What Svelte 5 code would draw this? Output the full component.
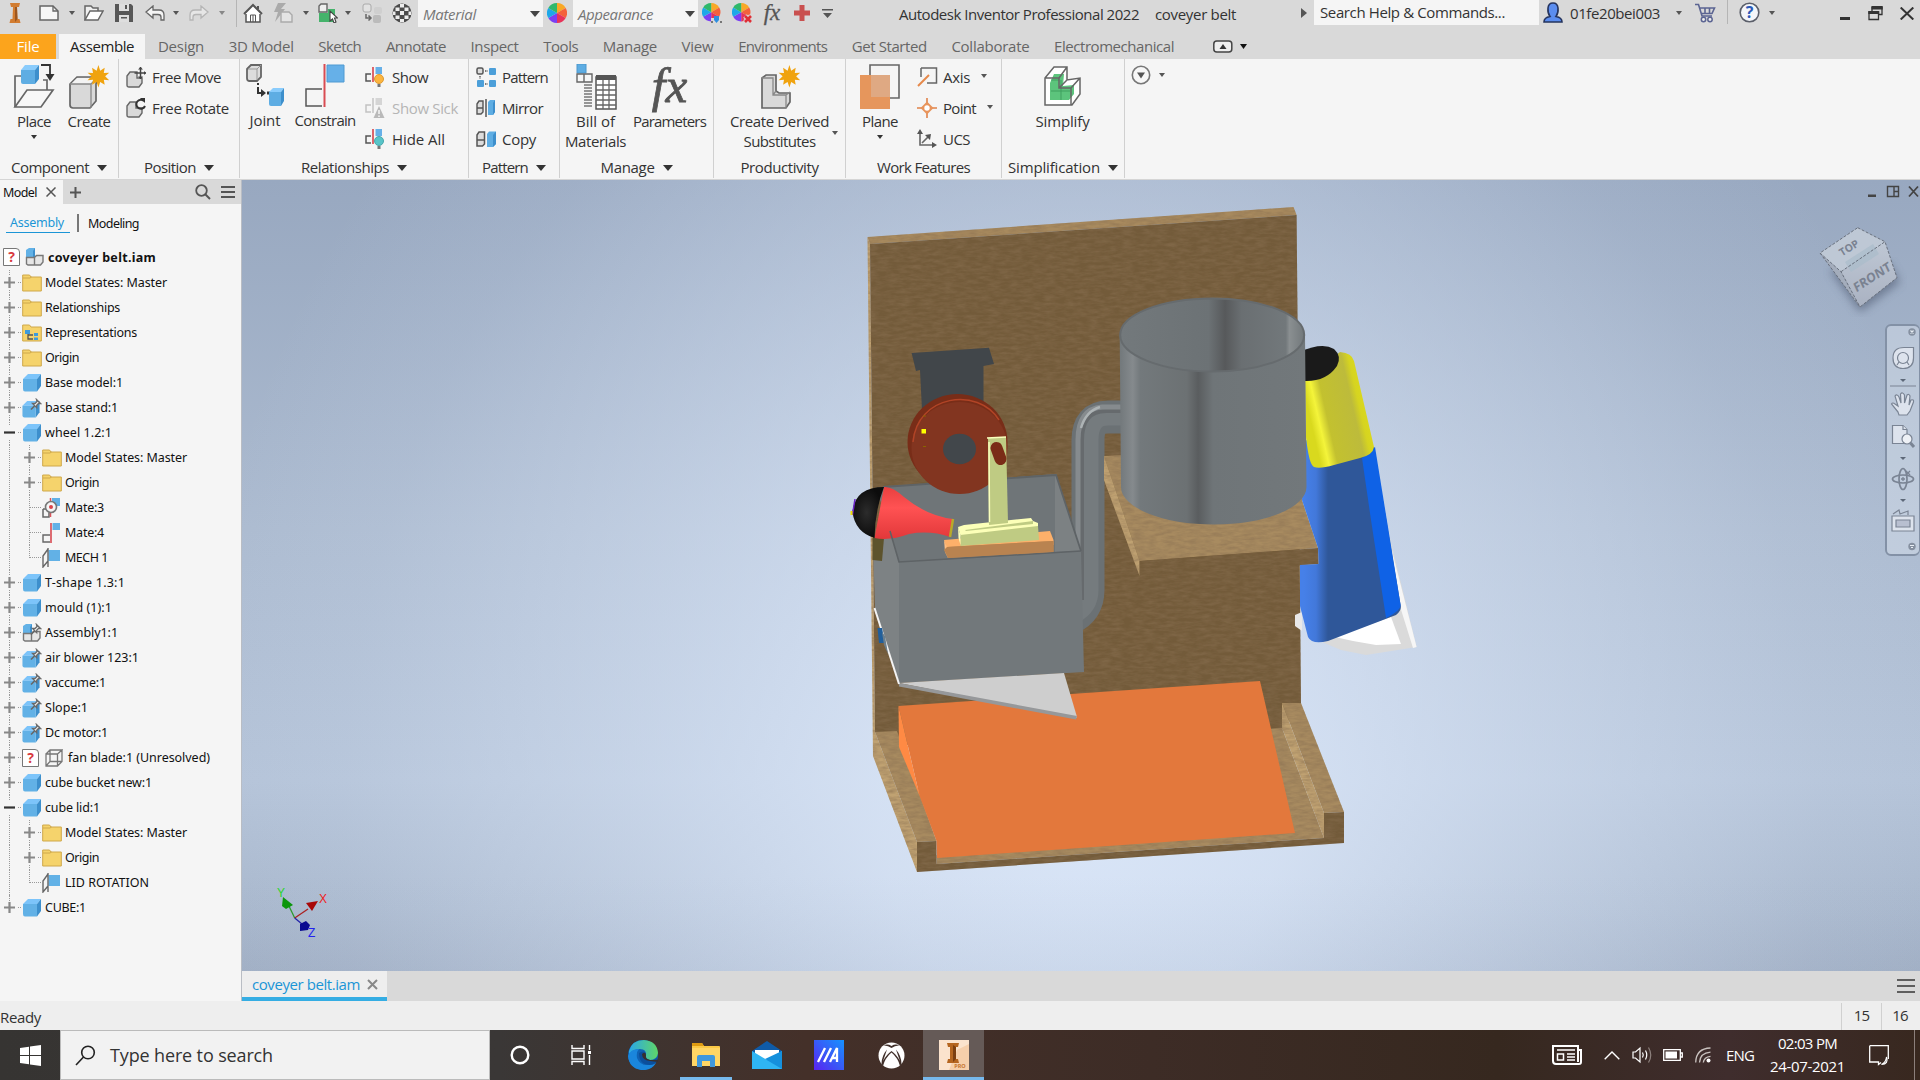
<script>
  // Tightens or loosens letter spacing so a label occupies its designed width.
  function fit(node, width) {
    const natural = node.getBoundingClientRect().width;
    const count = node.textContent.length;
    if (width && count) node.style.letterSpacing = (width - natural) / count + 'px';
  }

  const quick = [
    ['logo', 9, 12], ['new', 18, 20], ['caret', 9, 8], ['open', 8, 20], ['save', 11, 18], ['undo', 12, 20], ['caret', 7, 8],
    ['redo', 9, 20], ['caretDim', 9, 8], ['sep', 9, 2], ['home', 6, 20], ['update', 10, 20], ['caret', 9, 8],
    ['select', 8, 20], ['caret', 6, 8], ['replace', 10, 20], ['sphere', 10, 20]
  ];
  const quick2 = [['wheelAdd', 4, 20], ['wheelDel', 10, 20], ['fxs', 10, 20], ['plus', 12, 16], ['more', 12, 11]];

  const tabs = [
    ['Design', 46], ['3D Model', 65], ['Sketch', 43], ['Annotate', 60], ['Inspect', 48], ['Tools', 35], ['Manage', 54],
    ['View', 32], ['Environments', 89], ['Get Started', 75], ['Collaborate', 78], ['Electromechanical', 120]
  ];

  const tree = [
    { t: 'Model States: Master', w: 122, i: 'folder', e: '+' },
    { t: 'Relationships', w: 75, i: 'folder', e: '+' },
    { t: 'Representations', w: 92, i: 'repfolder', e: '+' },
    { t: 'Origin', w: 34, i: 'folder', e: '+' },
    { t: 'Base model:1', w: 78, i: 'part', e: '+' },
    { t: 'base stand:1', w: 73, i: 'pinned', e: '+' },
    { t: 'wheel 1.2:1', w: 67, i: 'part', e: '-' },
    { t: 'Model States: Master', w: 122, i: 'folder', e: '+', c: 1 },
    { t: 'Origin', w: 34, i: 'folder', e: '+', c: 1 },
    { t: 'Mate:3', w: 39, i: 'mateaxis', c: 1 },
    { t: 'Mate:4', w: 39, i: 'mate', c: 1 },
    { t: 'MECH 1', w: 43, i: 'angle', c: 1, last: 1 },
    { t: 'T-shape 1.3:1', w: 80, i: 'part', e: '+' },
    { t: 'mould (1):1', w: 67, i: 'part', e: '+' },
    { t: 'Assembly1:1', w: 73, i: 'asmpin', e: '+' },
    { t: 'air blower 123:1', w: 94, i: 'pinned', e: '+' },
    { t: 'vaccume:1', w: 61, i: 'pinned', e: '+' },
    { t: 'Slope:1', w: 43, i: 'pinned', e: '+' },
    { t: 'Dc motor:1', w: 63, i: 'pinned', e: '+' },
    { t: 'fan blade:1 (Unresolved)', w: 142, i: 'missing', i2: 'wire', e: '+' },
    { t: 'cube bucket new:1', w: 107, i: 'part', e: '+' },
    { t: 'cube lid:1', w: 55, i: 'part', e: '-' },
    { t: 'Model States: Master', w: 122, i: 'folder', e: '+', c: 1 },
    { t: 'Origin', w: 34, i: 'folder', e: '+', c: 1 },
    { t: 'LID ROTATION', w: 84, i: 'angle', c: 1, last: 1 },
    { t: 'CUBE:1', w: 41, i: 'part', e: '+', end: 1 }
  ];
</script>

{#snippet txt(t, w)}<span class="fit" use:fit={w}>{t}</span>{/snippet}

{#snippet wheelShape()}
  <g>
    <path d="M10 10V0A10 10 0 0 1 18.7 5Z" fill="#f9a825" />
    <path d="M10 10L18.7 5A10 10 0 0 1 18.7 15Z" fill="#f4613c" />
    <path d="M10 10L18.7 15A10 10 0 0 1 10 20Z" fill="#e8335a" />
    <path d="M10 10V20A10 10 0 0 1 1.3 15Z" fill="#7b3ff2" />
    <path d="M10 10L1.3 15A10 10 0 0 1 1.3 5Z" fill="#1ea7e8" />
    <path d="M10 10L1.3 5A10 10 0 0 1 10 0Z" fill="#2fb86a" />
  </g>
{/snippet}

{#snippet cube()}
  <path d="M1 6L6 1H19L15 6Z" fill="#7cc4fa" />
  <path d="M15 6L19 1V13L15 18.500Z" fill="#3d8fcc" />
  <path d="M1 6H15V18.500H3Q1 18.500 1 16Z" fill="#62b1e6" />
{/snippet}

{#snippet pin()}
  <path d="M9 11.500L12.500 8" stroke="#666" stroke-width="1.600" fill="none" />
  <path d="M10.500 5.500L13 5.500L15 3.500L14.500 1.500L18.500 5.500L16.500 5.500L14.700 7.200L14.700 9.700Z" fill="#f2f2f2" stroke="#6a6a6a" stroke-width="1.300" />
{/snippet}

{#snippet ico(n)}
  {#if n === 'logo'}<svg width="12" height="20" viewBox="0 0 12 20"><path d="M1 0H11L10 4H8L8.500 16H10.500L11.500 20H.5L1.500 16H3.500L4 4H2Z" fill="#d27c30" /><path d="M6 4H8L8.500 16L6 19Z" fill="#9c561f" /></svg>
  {:else if n === 'new'}<svg width="20" height="18" viewBox="0 0 20 18"><path d="M1 2H14L19 7V16H1Z" fill="#f7f7f7" stroke="#666" stroke-width="1.500" /><path d="M14 2V7H19" fill="none" stroke="#666" stroke-width="1.300" /></svg>
  {:else if n === 'caret'}<svg width="8" height="5" viewBox="0 0 8 5"><path d="M1 0H7L4 4Z" fill="#555" /></svg>
  {:else if n === 'caretDim'}<svg width="8" height="5" viewBox="0 0 8 5"><path d="M1 0H7L4 4Z" fill="#888" /></svg>
  {:else if n === 'open'}<svg width="20" height="18" viewBox="0 0 20 18"><path d="M1 16V2H7L9 4H14V7" fill="#f0f0f0" stroke="#666" stroke-width="1.500" /><path d="M1 16L6 7H19L14 16Z" fill="#fff" stroke="#666" stroke-width="1.500" /></svg>
  {:else if n === 'save'}<svg width="18" height="18" viewBox="0 0 18 18"><path d="M0 0H16L18 2V18H0Z" fill="#575757" /><path d="M4 0H14V7H4ZM4 11H14V18H4Z" fill="#dedede" /><path d="M10 1H12V5H10ZM6 13H12V14.500H6Z" fill="#575757" /></svg>
  {:else if n === 'undo'}<svg width="20" height="16" viewBox="0 0 20 16"><path d="M1 7L8 1V5H14Q19 5 19 10V15H16V12Q16 9.500 13 9.500H8V13Z" fill="#f4f4f4" stroke="#666" stroke-width="1.300" /></svg>
  {:else if n === 'redo'}<svg width="20" height="16" viewBox="0 0 20 16"><path d="M19 7L12 1V5H6Q1 5 1 10V15H4V12Q4 9.500 7 9.500H12V13Z" fill="#e6e6e6" stroke="#b5b5b5" stroke-width="1.300" /></svg>
  {:else if n === 'sep'}<span class="sep"></span>
  {:else if n === 'home'}<svg width="20" height="20" viewBox="0 0 20 20"><path d="M3 10V19H17V10" fill="#fff" stroke="#555" stroke-width="1.500" /><path d="M1 11L10 2L19 11M15 3V6" fill="#fff" stroke="#555" stroke-width="2" /><path d="M7.500 19V12H12.500V19M10 12V19" fill="none" stroke="#555" /></svg>
  {:else if n === 'update'}<svg width="20" height="20" viewBox="0 0 20 20"><path d="M5 0H13L8 6H12L2 19L5 9H1Z" fill="#aaa" /><path d="M8 9H16L19 12V19H8Z" fill="#e4e4e4" stroke="#aaa" stroke-width="1.400" /></svg>
  {:else if n === 'select'}<svg width="20" height="20" viewBox="0 0 20 20"><path d="M1 3L3 1H9V9H1Z" fill="#eee" stroke="#666" stroke-width="1.400" /><path d="M1 10H10V19H1ZM10 6H17V19H10Z" fill="#45b36b" /><path d="M12 8V18L14.500 16L16 20L18 19L16.500 15H19.500Z" fill="#fff" stroke="#444" stroke-width="1.100" /></svg>
  {:else if n === 'replace'}<svg width="20" height="20" viewBox="0 0 20 20"><rect x="1" y="1" width="8" height="8" rx="2" fill="#e2e2e2" stroke="#aaa" /><rect x="12" y="4" width="8" height="7" rx="2" fill="#cfcfcf" /><path d="M4 11V15H8M6.500 12.500L9 15L6.500 17.500" fill="none" stroke="#666" stroke-width="1.500" /><rect x="11" y="12" width="8" height="8" rx="2" fill="#bbb" /></svg>
  {:else if n === 'sphere'}<svg width="20" height="20" viewBox="0 0 20 20"><circle cx="10" cy="10" r="9.500" fill="#4b4b4b" /><g fill="#ececec"><rect x="8" y="1" width="4" height="3.500" /><rect x="3.500" y="4.500" width="4" height="3.500" /><rect x="12.500" y="4.500" width="4" height="3.500" /><rect x="8" y="8" width="4" height="4" /><rect x="1" y="8.500" width="2.500" height="3.500" /><rect x="16.500" y="8.500" width="2.500" height="3.500" /><rect x="3.500" y="12.500" width="4" height="3.500" /><rect x="12.500" y="12.500" width="4" height="3.500" /><rect x="8" y="16" width="4" height="3" /></g></svg>
  {:else if n === 'wheel'}<svg width="20" height="20" viewBox="0 0 20 20">{@render wheelShape()}</svg>
  {:else if n === 'wheelAdd'}<svg width="20" height="20" viewBox="0 0 20 20"><g transform="scale(.92)">{@render wheelShape()}</g><path d="M9 15H20V20H9Z" fill="#d9d9d9" /><path d="M12 13H17V17L14.500 20L12 17Z" fill="#2c8de0" /><path d="M10 18V20M19 18V20" stroke="#555" stroke-width="1.500" /></svg>
  {:else if n === 'wheelDel'}<svg width="20" height="20" viewBox="0 0 20 20"><g transform="scale(.92)">{@render wheelShape()}</g><path d="M13 13L19 19M19 13L13 19" stroke="#d9d9d9" stroke-width="5" /><path d="M13 13L19 19M19 13L13 19" stroke="#e02f36" stroke-width="2.600" /></svg>
  {:else if n === 'fxs'}<span class="fx mini-fx">fx</span>
  {:else if n === 'plus'}<svg width="16" height="16" viewBox="0 0 16 16"><path d="M5.500 0H10.500V5.500H16V10.500H10.500V16H5.500V10.500H0V5.500H5.500Z" fill="#c9504f" /></svg>
  {:else if n === 'more'}<svg width="11" height="9" viewBox="0 0 11 9"><path d="M0 0H11V1.500H0ZM1 4H10L5.500 9Z" fill="#555" /></svg>
  {:else if n === 'folder'}<svg width="20" height="18" viewBox="0 0 20 18"><path d="M.7 1H7.500L9 3H19.300V17H.7Z" fill="#f5d36c" stroke="#cfa84a" /><path d="M1 4H8L9.500 3" fill="none" stroke="#cfa84a" /></svg>
  {:else if n === 'repfolder'}<svg width="20" height="18" viewBox="0 0 20 18"><path d="M.7 1H7.500L9 3H19.300V17H.7Z" fill="#f5d36c" stroke="#cfa84a" /><path d="M3 6H8V10H3ZM12 9H16V12H12ZM12 13.500H16V16H12Z" fill="#3e9bdc" /><path d="M6 10V15H11M6 11H11" stroke="#555" fill="none" stroke-width="1.300" /></svg>
  {:else if n === 'part'}<svg width="20" height="19" viewBox="0 0 20 19">{@render cube()}</svg>
  {:else if n === 'pinned'}<svg width="20" height="20" viewBox="0 0 20 20"><g transform="translate(-.5 2) scale(.95)">{@render cube()}</g>{@render pin()}</svg>
  {:else if n === 'asm' || n === 'asmpin'}<svg width="20" height="20" viewBox="0 0 20 20"><path d="M1 3L4 1H10V10H1Z" fill="#62b1e6" /><path d="M10 1L8 4V10H10Z" fill="#3d8fcc" /><path d="M1.500 10.500H9.500V18H3L1.500 17ZM9.500 10.500L11.500 8.500H18V15L15.500 18H9.500Z" fill="#e6e6e6" stroke="#777" stroke-width="1.400" />{#if n === 'asmpin'}{@render pin()}{/if}</svg>
  {:else if n === 'missing'}<span class="missing">?</span>
  {:else if n === 'wire'}<svg width="18" height="18" viewBox="0 0 18 18"><path d="M1 5H12.500V17H1ZM1 5L5 1H17L12.500 5M17 1V12.500L12.500 17M5 1V12.500H17M5 12.500L1 17" fill="none" stroke="#777" stroke-width="1.300" /></svg>
  {:else if n === 'mateaxis'}<svg width="20" height="20" viewBox="0 0 20 20"><path d="M10 0H18V8H10Z" fill="#62b1e6" /><path d="M1 11H8M1 11V19H7V15" fill="none" stroke="#666" stroke-width="1.500" /><path d="M8.500 0V20" stroke="#d9535a" stroke-width="1.500" stroke-dasharray="4 1" /><circle cx="9" cy="9" r="5.500" fill="#f5f5f5" stroke="#777" stroke-width="1.600" /><circle cx="9" cy="9" r="2" fill="#d9434a" /></svg>
  {:else if n === 'mate'}<svg width="20" height="20" viewBox="0 0 20 20"><path d="M10.500 0H18V7H10.500Z" fill="#62b1e6" /><path d="M8 12H1V19H8" fill="none" stroke="#666" stroke-width="1.400" /><path d="M9 0V20" stroke="#d9535a" stroke-width="1.700" /></svg>
  {:else if n === 'angle'}<svg width="20" height="20" viewBox="0 0 20 20"><path d="M6.500 2H18V13H6.500Z" fill="#62b1e6" /><path d="M1 19V8L6 1V13ZM6 0V19" fill="#f5f5f5" stroke="#666" stroke-width="1.400" /></svg>
  {:else if n === 'place'}<svg width="42" height="46" viewBox="0 0 42 46"><path d="M2 43V12H8M30 16H34V27" fill="none" stroke="#666" stroke-width="1.700" /><path d="M2 43L14 26H40L28 43Z" fill="#f7f7f7" stroke="#666" stroke-width="1.700" /><path d="M8 6L12 1H26L22 6Z" fill="#8accfc" /><path d="M22 6L26 1V15L22 20Z" fill="#3d8fcc" /><path d="M8 6H22V20H10Q8 20 8 18Z" fill="#5eade3" /><path d="M28 1H37V13" fill="none" stroke="#333" stroke-width="1.800" /><path d="M32.500 10H41.500L37 17Z" fill="#333" /></svg>
  {:else if n === 'create'}<svg width="42" height="46" viewBox="0 0 42 46"><path d="M2 20L9 13H30L28 20V37L22 44H5Q2 44 2 41Z" fill="#d9d9d9" stroke="#666" stroke-width="1.700" /><path d="M3 20L9 14H29L23 20Z" fill="#f3f3f3" /><path d="M2 20H23V44M23 20L29 14" fill="none" stroke="#888" stroke-width="1.300" />{@render star()}</svg>
  {:else if n === 'derived'}<svg width="42" height="46" viewBox="0 0 42 46"><path d="M3 14L7 11H17V27L20 29H31V38L27 44H3Z" fill="#d9d9d9" stroke="#666" stroke-width="1.700" /><path d="M3 14H14V31H27V44M14 31L17 27M27 31L31 28" fill="none" stroke="#888" stroke-width="1.300" />{@render star()}</svg>
  {:else if n === 'joint'}<svg width="40" height="46" viewBox="0 0 40 46"><path d="M2 6L6 2H16V14L12 18H4Q2 18 2 15Z" fill="#ddd" stroke="#666" stroke-width="1.800" /><path d="M12 6V17M3 6H12L16 2" fill="none" stroke="#999" /><path d="M13 20V22M13 24V30H17" stroke="#333" stroke-width="2" fill="none" /><path d="M22 28.500H25V31.500H22Z" fill="#333" /><path d="M16 26L21 30L16 34Z" fill="#333" /><path d="M24 29L28 25H39L36 29Z" fill="#8accfc" /><path d="M36 29L39 25V38L36 43Z" fill="#3d8fcc" /><path d="M24 29H36V43H26Q24 43 24 41Z" fill="#5eade3" /></svg>
  {:else if n === 'constrain'}<svg width="42" height="46" viewBox="0 0 42 46"><path d="M23 2H40V19H23Z" fill="#66b0e8" stroke="#4e9ad2" /><path d="M18 26H2V43H18" fill="none" stroke="#555" stroke-width="1.500" /><path d="M20.500 1V44" stroke="#d94c53" stroke-width="2" /></svg>
  {:else if n === 'show' || n === 'hide' || n === 'sick'}<svg width="20" height="21" viewBox="0 0 20 21"><path d="M10.500 0H17V7H10.500Z" fill={n === 'sick' ? '#d5d5d5' : '#66b0e8'} /><path d="M6 7H1V14H6" fill="none" stroke={n === 'sick' ? '#c2c2c2' : '#555'} stroke-width="1.500" /><path d="M8 0V15" stroke={n === 'sick' ? '#c9c9c9' : '#d94c53'} stroke-width="1.700" />{#if n === 'sick'}<path d="M14 8L19.500 20H8.500Z" fill="#b9b9b9" /><path d="M14 12V16M14 17.500V19" stroke="#fff" stroke-width="1.300" />{:else}<circle cx="14" cy="12" r="4.500" fill={n === 'show' ? '#fcb53e' : '#58c4c8'} stroke={n === 'show' ? '#de9a31' : '#48a8ac'} /><path d="M12.500 17H15.500V20H12.500Z" fill="#777" />{/if}</svg>
  {:else if n === 'pattern'}<svg width="20" height="20" viewBox="0 0 20 20"><rect x="1" y="1" width="6" height="6" rx="1.500" fill="#ddd" stroke="#555" stroke-width="1.500" /><rect x="13" y="1" width="7" height="7" rx="1" fill="#4c9fd9" /><rect x="1" y="13" width="7" height="7" rx="1" fill="#4c9fd9" /><rect x="13" y="13" width="7" height="7" rx="1" fill="#4c9fd9" /><path d="M9 4H12M4 9V12M9 17H12" stroke="#555" stroke-width="1.400" stroke-dasharray="1.500 1" /></svg>
  {:else if n === 'mirror'}<svg width="20" height="20" viewBox="0 0 20 20"><path d="M1 6L3 3H7V14L5 16H1ZM1 10H7" fill="#ddd" stroke="#555" stroke-width="1.400" /><path d="M10 1V19" stroke="#555" stroke-width="1.500" /><path d="M12 4L14 2H19V14L17 17H12Z" fill="#5eade3" /><path d="M17 5L19 2V14L17 17Z" fill="#3d8fcc" /></svg>
  {:else if n === 'copy'}<svg width="20" height="20" viewBox="0 0 20 20"><path d="M1 6L3 3H8.500V15L6.500 17H1ZM1 11H8" fill="#ddd" stroke="#555" stroke-width="1.500" /><path d="M11 5L13 2.500H20V15L17 18H11Z" fill="#5eade3" /><path d="M17 6L20 2.500V15L17 18Z" fill="#3d8fcc" /></svg>
  {:else if n === 'bom'}<svg width="42" height="46" viewBox="0 0 42 46"><path d="M2 0H11V9H2Z" fill="#5eade3" stroke="#4c97cc" /><path d="M2 10H9V18H2ZM9 10H17V18H9Z" fill="#f7f7f7" stroke="#666" stroke-width="1.400" /><path d="M9 21H17M9 24H17M9 27H17M9 30H17M9 33H17M9 36H17M9 39H17M9 42H17" stroke="#777" stroke-width="1.400" /><path d="M21 13H41V45H21Z" fill="#fff" stroke="#555" stroke-width="1.500" /><path d="M21 11H41V16H21Z" fill="#555" /><path d="M21 21H41M21 26H41M21 31H41M21 36H41M21 41H41M28 16V45M34 16V45" stroke="#666" stroke-width="1.300" /></svg>
  {:else if n === 'fx'}<span class="fx">fx</span>
  {:else if n === 'plane'}<svg width="42" height="46" viewBox="0 0 42 46"><path d="M11 1H40V34H11Z" fill="#f5f5f5" stroke="#666" stroke-width="1.600" /><path d="M1 11H31V45H1Z" fill="#e6965c" /><path d="M12 11H31V33H12Z" fill="#dfa983" /></svg>
  {:else if n === 'axis'}<svg width="21" height="22" viewBox="0 0 21 22"><path d="M4 2H19.500V17H10M4 2V11" fill="none" stroke="#666" stroke-width="1.500" /><path d="M1 20L12 9" stroke="#e6884a" stroke-width="2" /></svg>
  {:else if n === 'point'}<svg width="20" height="20" viewBox="0 0 20 20"><path d="M10 0V20M0 10H20" stroke="#e0824a" stroke-width="1.600" /><path d="M10 3.500L16.500 10L10 16.500L3.500 10Z" fill="#e8945c" /><circle cx="10" cy="10" r="2.700" fill="#fff" /></svg>
  {:else if n === 'ucs'}<svg width="20" height="20" viewBox="0 0 20 20"><path d="M3 3V16H17M5 14L12 7" fill="none" stroke="#666" stroke-width="1.600" /><path d="M0 5L3 0L6 5ZM15 13L20 16L15 19ZM8 6L14 5L13 11Z" fill="#555" /></svg>
  {:else if n === 'simplify'}<svg width="40" height="42" viewBox="0 0 40 42"><path d="M2 12L11 1H24L22 15L37 13V28L29 39H2Z" fill="#fff" /><path d="M7 17L11 8H21L20 20L31 19V28L26 34H7Z" fill="#5cc47c" /><path d="M8 25H27M18 14V34M8 14H16" stroke="#3f9f5e" fill="none" /><path d="M2 12L11 1H24V14L37 12V28L29 39H2ZM2 12H16V22H28V39M16 12L24 1M28 22L37 12M16 22L24 14" fill="none" stroke="#666" stroke-width="1.500" /></svg>
  {/if}
{/snippet}

{#snippet star()}
  <path d="M31 0L33 6.500L38 3L37 9L43 8.500L38.500 12.500L43 17L37 16.500L38 22L33 19L31 25L29 19L24 22L25 16.500L19 17L23.500 12.500L19 8.500L25 9L24 3L29 6.500Z" transform="translate(2.500 1) scale(.9)" fill="#f0a30f" />
{/snippet}

{#snippet big(icon, label, w, cls)}
  <div class="big {cls}">
    <span class="bigicon">{@render ico(icon)}</span>
    <span class="lbl">{@render txt(label, w)}</span>
  </div>
{/snippet}

{#snippet small(icon, label, w, caret, cls)}
  <div class="small {cls ?? ''}">
    <span class="smallicon">{@render ico(icon)}</span>{@render txt(label, w)}{#if caret}<span class="tinycaret">{@render ico('caret')}</span>{/if}
  </div>
{/snippet}

{#snippet foot(label, w, caret)}
  <div class="foot">{@render txt(label, w)}{#if caret}<svg width="10" height="6" viewBox="0 0 10 6"><path d="M0 0H10L5 6Z" fill="#333" /></svg>{/if}</div>
{/snippet}

<div class="app">
  <header class="titlebar">
    {#each quick as [n, gap, w]}
      <span class="q" style:margin-left="{gap}px" style:width="{w}px">{@render ico(n)}</span>
    {/each}
    <div class="combo mat">{@render txt('Material', 53)}<svg width="10" height="6" viewBox="0 0 10 6"><path d="M0 0H10L5 6Z" fill="#444" /></svg></div>
    <span class="q wheel">{@render ico('wheel')}</span>
    <div class="combo">{@render txt('Appearance', 75)}<svg width="10" height="6" viewBox="0 0 10 6"><path d="M0 0H10L5 6Z" fill="#444" /></svg></div>
    {#each quick2 as [n, gap, w]}
      <span class="q" style:margin-left="{gap}px" style:width="{w}px">{@render ico(n)}</span>
    {/each}
    <div class="apptitle">{@render txt('Autodesk Inventor Professional 2022', 240)}</div>
    <div class="doctitle">{@render txt('coveyer belt', 81)}</div>
    <svg class="tri" width="6" height="10" viewBox="0 0 6 10"><path d="M0 0L6 5L0 10Z" fill="#555" /></svg>
    <div class="help">{@render txt('Search Help & Commands...', 185)}</div>
    <svg class="person" width="20" height="21" viewBox="0 0 20 21"><path d="M1 20Q1 15.500 7 14.500Q4.500 11 5 6Q5.500 1 10 1Q14.500 1 15 6Q15.500 11 13 14.500Q19 15.500 19 20Z" fill="#5b8def" stroke="#25345e" stroke-width="1.600" /></svg>
    <div class="user">{@render txt('01fe20bei003', 90)}</div>
    <span class="q ucaret">{@render ico('caret')}</span>
    <svg class="cart" width="21" height="20" viewBox="0 0 21 20"><path d="M0 1.500H3.500L7 13H17M4.500 5H19.500L17 10.500H6.500M10 5V10M14.500 5V10" fill="none" stroke="#5b6492" stroke-width="1.600" /><circle cx="8.500" cy="16.500" r="2.200" fill="#eee" stroke="#5b6492" stroke-width="1.500" /><circle cx="15" cy="16.500" r="2.200" fill="#eee" stroke="#5b6492" stroke-width="1.500" /></svg>
    <span class="sep hsep"></span>
    <svg class="qm" width="21" height="21" viewBox="0 0 21 21"><circle cx="10.500" cy="10.500" r="9.300" fill="#f4f6fa" stroke="#5b5f6a" stroke-width="1.600" /><text x="10.500" y="16.200" text-anchor="middle" font-size="16" font-weight="bold" fill="#2b59b8">?</text></svg>
    <span class="q qcaret">{@render ico('caret')}</span>
    <svg class="wmin" width="10" height="3"><rect width="10" height="3" fill="#333" /></svg>
    <svg class="wres" width="15" height="15" viewBox="0 0 15 15"><path d="M4 5V1.500H14V8.500H11M1 6H10.500V13.500H1Z" fill="none" stroke="#333" stroke-width="1.300" /><path d="M3.500 0H14.700V3.500H3.500ZM.3 5H11.200V8H.3Z" fill="#333" /></svg>
    <svg class="wx" width="14" height="13" viewBox="0 0 14 13"><path d="M.7 .5L13.300 12.500M13.300 .5L.7 12.500" stroke="#333" stroke-width="2" /></svg>
  </header>

  <nav class="tabs">
    <div class="file">{@render txt('File', 23)}</div>
    <div class="active">{@render txt('Assemble', 64)}</div>
    <div class="others">{#each tabs as [t, w]}{@render txt(t, w)}{/each}</div>
    <svg class="mini" width="20" height="13" viewBox="0 0 20 13"><rect x=".8" y="1" width="18" height="11" rx="3" fill="#eee" stroke="#444" stroke-width="1.500" /><path d="M10 4L13.500 9H6.500Z" fill="#333" /></svg>
    <svg width="7" height="5" viewBox="0 0 7 5"><path d="M0 0H7L3.500 5Z" fill="#111" /></svg>
  </nav>

  <section class="ribbon">
    <div class="panel p1"><div class="tools">{@render big('place', 'Place', 34, 'wplace drop')}{@render big('create', 'Create', 43, 'wcreate')}</div>{@render foot('Component', 78, 1)}</div>
    <div class="panel p2"><div class="tools"><div class="col">
      <div class="small"><span class="smallicon"><svg width="20" height="21" viewBox="0 0 20 21"><path d="M1 9L4 5H11V11H16V16L13 20H3Q1 20 1 18Z" fill="#d9d9d9" stroke="#666" stroke-width="1.400" /><path d="M14.500 0V12M8.500 6H20" stroke="#444" stroke-width="1.500" /><path d="M12 2.500L14.500 0L17 2.500ZM12 9.500L14.500 12L17 9.500ZM18 4L20 6L18 8Z" fill="#444" /></svg></span>{@render txt('Free Move', 69)}</div>
      <div class="small"><span class="smallicon"><svg width="20" height="21" viewBox="0 0 20 21"><path d="M1 8L4 4H10V10H16V15L13 19H3Q1 19 1 17Z" fill="#d9d9d9" stroke="#666" stroke-width="1.400" /><path d="M18 3A4.500 4.500 0 1 0 19 8" fill="none" stroke="#333" stroke-width="2" /><path d="M14 0H19V5Z" fill="#333" /></svg></span>{@render txt('Free Rotate', 77)}</div>
    </div></div>{@render foot('Position', 52, 1)}</div>
    <div class="panel p3"><div class="tools">{@render big('joint', 'Joint', 31, 'wjoint up')}{@render big('constrain', 'Constrain', 61, 'wcons up')}<div class="col">{@render small('show', 'Show', 36)}{@render small('sick', 'Show Sick', 66, 0, 'dim')}{@render small('hide', 'Hide All', 53)}</div></div>{@render foot('Relationships', 88, 1)}</div>
    <div class="panel p4"><div class="tools"><div class="col">{@render small('pattern', 'Pattern', 46)}{@render small('mirror', 'Mirror', 41)}{@render small('copy', 'Copy', 34)}</div></div>{@render foot('Pattern', 46, 1)}</div>
    <div class="panel p5"><div class="tools">
      <div class="big wbom"><span class="bigicon">{@render ico('bom')}</span><span class="lbl">{@render txt('Bill of', 39)}</span><span class="lbl">{@render txt('Materials', 61)}</span></div>
      {@render big('fx', 'Parameters', 73, 'wparam')}</div>{@render foot('Manage', 54, 1)}</div>
    <div class="panel p6"><div class="tools">
      <div class="big wder"><span class="bigicon">{@render ico('derived')}</span><span class="lbl">{@render txt('Create Derived', 99)}</span><span class="lbl">{@render txt('Substitutes', 72)}</span></div>
      <span class="dcaret">{@render ico('caret')}</span></div>{@render foot('Productivity', 78)}</div>
    <div class="panel p7"><div class="tools">{@render big('plane', 'Plane', 36, 'wplane drop')}<div class="col">{@render small('axis', 'Axis', 27, 1)}{@render small('point', 'Point', 33, 1)}{@render small('ucs', 'UCS', 27)}</div></div>{@render foot('Work Features', 93)}</div>
    <div class="panel p8"><div class="tools">{@render big('simplify', 'Simplify', 54, 'wsimp')}</div>{@render foot('Simplification', 92, 1)}</div>
    <div class="extra"><svg width="20" height="20" viewBox="0 0 20 20"><circle cx="10" cy="10" r="8.700" fill="#f7f7f7" stroke="#777" stroke-width="1.600" /><path d="M6 7.500H14L10 13.500Z" fill="#555" /></svg>{@render ico('caret')}</div>
  </section>

  <main class="work">
    <aside class="browser">
      <div class="btabs">
        <div class="btab">{@render txt('Model', 34)}<svg width="10" height="10" viewBox="0 0 10 10"><path d="M.5 .5L9.500 9.500M9.500 .5L.5 9.500" stroke="#555" stroke-width="1.500" /></svg></div>
        <svg class="add" width="11" height="11" viewBox="0 0 11 11"><path d="M5.500 0V11M0 5.500H11" stroke="#555" stroke-width="2" /></svg>
        <svg class="srch" width="16" height="16" viewBox="0 0 16 16"><circle cx="6.500" cy="6.500" r="5.300" fill="none" stroke="#555" stroke-width="1.800" /><path d="M10.500 10.500L15 15" stroke="#555" stroke-width="2" /></svg>
        <svg width="14" height="12" viewBox="0 0 14 12"><path d="M0 1H14M0 6H14M0 11H14" stroke="#555" stroke-width="2" /></svg>
      </div>
      <div class="modes"><span class="on">{@render txt('Assembly', 54)}</span><i></i>{@render txt('Modeling', 51)}</div>
      <div class="tree">
        <div class="row root">{@render ico('missing')}<span class="rooticon">{@render ico('asm')}</span><b>{@render txt('coveyer belt.iam', 108)}</b></div>
        {#each tree as r}
          <div class="row" class:child={r.c} class:last={r.last} class:end={r.end}>
            {#if r.c}<span class="guide"></span>{/if}
            <span class="exp" class:leaf={!r.e}>{#if r.e}<svg width="11" height="11" viewBox="0 0 11 11"><path d={r.e === '+' ? 'M5.500 0V11M0 5.500H11' : 'M0 5.500H11'} stroke={r.e === '+' ? '#888' : '#333'} stroke-width="2.200" /></svg>{/if}</span>
            <span class="ti">{@render ico(r.i)}</span>{#if r.i2}<span class="ti two">{@render ico(r.i2)}</span>{/if}
            {@render txt(r.t, r.w)}
          </div>
        {/each}
      </div>
    </aside>

    <section class="stage">
      <div class="viewport">
        <svg class="scene" viewBox="242 181 1678 790" width="1678" height="790">
          <defs>
            <filter id="grain" x="0" y="0" width="100%" height="100%" color-interpolation-filters="sRGB">
              <feTurbulence type="fractalNoise" baseFrequency=".09 .32" numOctaves="3" seed="4" result="n" />
              <feColorMatrix in="n" type="matrix" values="0 0 0 0 .54  0 0 0 0 .44  0 0 0 0 .32  1 0 0 0 -.3" result="c" />
              <feComposite in="c" in2="SourceGraphic" operator="in" result="g" />
              <feMerge><feMergeNode in="SourceGraphic" /><feMergeNode in="g" /></feMerge>
            </filter>
            <linearGradient id="can"><stop offset="0" stop-color="#72787b" /><stop offset=".07" stop-color="#858a8d" /><stop offset=".11" stop-color="#73797c" /><stop offset=".36" stop-color="#6c7173" /><stop offset=".42" stop-color="#5a5d5f" /><stop offset=".5" stop-color="#6f7578" /><stop offset="1" stop-color="#72787b" /></linearGradient>
            <linearGradient id="inner"><stop offset="0" stop-color="#73797c" /><stop offset=".48" stop-color="#6c7275" /><stop offset=".57" stop-color="#57595b" /><stop offset=".66" stop-color="#6a6f72" /><stop offset=".9" stop-color="#72787b" /><stop offset=".92" stop-color="#8a8f91" /><stop offset="1" stop-color="#72787b" /></linearGradient>
            <linearGradient id="yel" gradientUnits="userSpaceOnUse" x1="1306" y1="400" x2="1372" y2="385"><stop offset="0" stop-color="#d9d91e" /><stop offset=".12" stop-color="#f4f43a" /><stop offset=".25" stop-color="#c3c12f" /><stop offset=".65" stop-color="#bdbb3b" /><stop offset=".75" stop-color="#d6d420" /><stop offset="1" stop-color="#e0de1c" /></linearGradient>
            <linearGradient id="blu" gradientUnits="userSpaceOnUse" x1="1304" y1="0" x2="1328" y2="0"><stop offset="0" stop-color="#4680e8" /><stop offset=".5" stop-color="#4278da" /><stop offset="1" stop-color="#2f5799" /></linearGradient>
            <linearGradient id="red" x2="0" y2="1"><stop offset="0" stop-color="#e8403f" /><stop offset=".4" stop-color="#ff5253" /><stop offset="1" stop-color="#e2383a" /></linearGradient>
            <radialGradient id="ball" cx=".45" cy=".5"><stop offset="0" stop-color="#2c2c2c" /><stop offset="1" stop-color="#0c0c0c" /></radialGradient>
            <linearGradient id="cubef" x2="0" y2="1"><stop offset="0" stop-color="#c3ccd8" /><stop offset="1" stop-color="#aab2c2" /></linearGradient>
            <filter id="soft"><feGaussianBlur stdDeviation="5" /></filter>
          </defs>
          <!-- wooden frame -->
          <g filter="url(#grain)">
            <path d="M867.500 237L870 244L875 732L917 842V872L873 756Z" fill="#c0a272" />
            <path d="M867.500 237L1293.500 207L1296.600 215L870 244Z" fill="#a88a5e" />
            <path d="M870 244L1296.600 215L1301 703L1282 730L1271 740L900 745L875 732Z" fill="#735b3a" />
            <path d="M875 732L897 731L936.500 841L917 842Z" fill="#a88b60" />
            <path d="M1268 729L1282 728L1324 838L936.500 864V855Z" fill="#a88b60" />
            <path d="M1282 703H1301L1344 812L1324 813Z" fill="#a88b60" />
            <path d="M1282 703L1324 813V838L1282 728Z" fill="#c0a272" />
            <path d="M917 842L936.500 841V864L1324 838V813L1344 812V843L917 872Z" fill="#735b3a" />
          </g>
          <path d="M898.500 706L1260 681L1295 833L937 858L936.500 841L919.600 796Z" fill="#e3783c" />
          <path d="M898.500 706L919.600 796L899 747Z" fill="#ff8a44" />
          <!-- wheel bracket -->
          <path d="M911.600 353L989 347.700L994 364L983.500 366V405L922 410L920 370L916 371Z" fill="#41464a" />
          <!-- elbow pipe -->
          <g fill="none">
            <path d="M1126 417H1108Q1088 417 1088 440V590Q1088 610 1070 618" stroke="#6b7174" stroke-width="33" />
            <path d="M1126 416H1108Q1089 416 1089 440V590Q1089 606 1074 614" stroke="#757b7e" stroke-width="19" />
            <path d="M1126 411H1106Q1082 411 1082 440V600" stroke="#5f6467" stroke-width="4" opacity=".7" />
            <path d="M1126 407H1102Q1078 409 1078 440V600" stroke="#868b8e" stroke-width="5" />
            <path d="M1100 407Q1086 411 1081 428" stroke="#adb3b5" stroke-width="2.500" />
          </g>
          <!-- shelf -->
          <g filter="url(#grain)">
            <path d="M1104 456L1302 448V500L1318 548L1139.600 561Z" fill="#a88b60" />
            <path d="M1104 456L1139.600 561V576L1104 480Z" fill="#c0a272" />
            <path d="M1139.600 561L1318 548L1318.700 564L1139.600 577Z" fill="#735b3a" />
          </g>
          <!-- vacuum -->
          <path d="M1388 530L1416.600 647L1366 655L1341 650L1322 642L1380 600Z" fill="#dadada" />
          <path d="M1391 547L1416.600 647L1413 648L1398 600Z" fill="#f6f6f6" />
          <path d="M1335 637L1391 617L1401 644L1376 645L1353 641Z" fill="#fff" />
          <path d="M1295 615L1302 612V631L1295 626Z" fill="#e8e8e8" />
          <path d="M1304 440L1374 447L1400.600 605Q1402 610 1396 615L1328 641Q1312 645 1308 637L1300 606V565L1318.700 564L1318 548L1302 500Z" fill="url(#blu)" />
          <path d="M1362 458L1375 447L1400.600 605Q1401 611 1386 618L1371 520Z" fill="#0f62e6" />
          <path d="M1305 380L1340 352Q1352 353 1354 361L1374 447Q1373 455 1360 458L1334 465Q1320 469 1314 467Q1309 465 1306 437Z" fill="url(#yel)" />
          <path d="M1300 352Q1322 342 1334 349Q1342 356 1337 366Q1326 382 1304 381Z" fill="#1a1a1a" />
          <!-- bucket -->
          <path d="M1119.700 335L1121 487A92.700 37.500 0 0 0 1306.500 487L1305 335Z" fill="url(#can)" />
          <ellipse cx="1212.200" cy="335" rx="92" ry="36.500" fill="url(#inner)" stroke="#666b6e" stroke-width="2" />
          <!-- open box -->
          <path d="M873 543L890 531L899 562V683L875 608Z" fill="#7d8284" />
          <path d="M874 488L1056 474L1081 551L899 562L884 508Z" fill="#6f7578" />
          <path d="M1055 476V552L1081 551L1056 474Z" fill="#7c8183" />
          <path d="M883 487L1056 475L1081 551" fill="none" stroke="#5e6366" stroke-width="1.800" />
          <!-- wheel -->
          <ellipse cx="957.500" cy="442" rx="50" ry="48" fill="#782d18" />
          <ellipse cx="959.500" cy="448" rx="48" ry="46" fill="#823520" />
          <path d="M913 442C917 395 978 386 999 420" fill="none" stroke="#b14426" stroke-width="1.500" />
          <ellipse cx="959.500" cy="449" rx="16.500" ry="15.200" fill="#42474b" />
          <rect x="921.500" y="429" width="4.500" height="4.500" fill="#ff0" />
          <path d="M923 416H926M923 446.500H926" stroke="#8a6500" />
          <!-- crank and slider -->
          <path d="M944 540L1050 531L1053.500 540V545L947 549Z" fill="#fdb06a" />
          <path d="M947 547L1053.500 541V552L948 558Z" fill="#b98350" />
          <path d="M944 540L947 547L948 558L945 552Z" fill="#ffbd80" />
          <path d="M958 527L964 525L1031 518L1033 521L1038 523V528L961 537Z" fill="#fcffb8" />
          <path d="M965 530L1033 521V524L966 531Z" fill="#bfcb83" />
          <path d="M988 438L1006 437L1008 523L989 525Z" fill="#bfcb83" />
          <path d="M987 438L1006 437M989 442L989.500 522" stroke="#faffbd" stroke-width="1.500" />
          <path d="M960.500 535L1038 526L1039 540L960.500 546Z" fill="#bfcb83" />
          <path d="M958 527L960.500 535V545L958.500 538Z" fill="#fcffb8" />
          <path d="M996.500 448L1000.500 459" stroke="#7a2c17" stroke-width="12" stroke-linecap="round" />
          <!-- blower -->
          <path d="M872.500 538H884L882 561L872.500 560Z" fill="#5d532c" />
          <path d="M884 487Q892 486 904 497Q927 516 953 519L950 537Q930 530 909 534Q890 541 874.500 538Z" fill="url(#red)" />
          <path d="M953 519L950 537" stroke="#b8aa2a" stroke-width="2.500" />
          <path d="M884 487Q875 510 874.500 538Q855 532 852.500 512Q855 487 884 487Z" fill="url(#ball)" />
          <path d="M855 499L852.500 515" stroke="#6b25c8" stroke-width="1.500" />
          <path d="M850.500 511H852.500V515H850.500Z" fill="#f0e000" />
          <!-- box front -->
          <path d="M899 562L1081 551L1084 672L899 683Z" fill="#72787b" />
          <path d="M890 531L899 562L1081 551" fill="none" stroke="#5e6366" stroke-width="1.600" />
          <path d="M944 550L948 558L1053.500 552V541L947 547Z" fill="#b98350" />
          <path d="M899 683L1064 673L1077 717L1076 718Z" fill="#cecece" />
          <path d="M899 683L1077 716L1076 719.500L899 686.500Z" fill="#96989a" />
          <path d="M874.500 608L899 684" stroke="#f4f4f4" stroke-width="2" />
          <path d="M877.500 628H882L885 643H879Z" fill="#215f9b" />
          <path d="M882 632L885 636L888 654L884 645Z" fill="#6c7f8d" />
          <!-- axis triad -->
          <g stroke-width="1.300">
            <path d="M294.700 918L288 904" stroke="#2a9a2a" /><path d="M294.700 918L308 909" stroke="#a22" /><path d="M294.700 918L302 924" stroke="#22a" />
            <path d="M283 897L293 905L286 909L282 906Z" fill="#0b960b" />
            <path d="M306 903L318 901L312 911Z" fill="#a80808" />
            <path d="M300 924L306 921L310 925L308 930L300 931Z" fill="#0a0a90" />
          </g>
          <g font-size="12" font-family="Liberation Sans, sans-serif">
            <text x="277" y="896.500" fill="#2ad52a">Y</text><text x="319" y="902.500" fill="#e22">X</text><text x="308" y="936.500" fill="#22e">Z</text>
          </g>
          <!-- view cube -->
          <path d="M1830 270L1860 312L1900 282L1888 262Z" fill="#4d5870" opacity=".6" filter="url(#soft)" />
          <path d="M1857.700 227.700L1885 241.700L1897 277.700L1860 307L1841 281L1820 253Z" fill="url(#cubef)" />
          <path d="M1857.700 227.700L1885 241.700L1841 271.700L1820 253Z" fill="#bec8d5" />
          <path d="M1820 253L1841 271.700L1860 307Z" fill="#a4adbc" />
          <path d="M1845 262L1873 244L1879 254L1851 272Z" fill="#a9bccb" opacity=".7" />
          <path d="M1857.700 227.700L1885 241.700L1897 277.700L1860 307L1820 253ZM1820 253L1841 271.700L1860 307M1841 271.700L1885 241.700" fill="none" stroke="#69717e" stroke-width="1" stroke-dasharray="3 1.500" />
          <g font-weight="bold" fill="#7a8291" text-anchor="middle" font-family="Open Sans, sans-serif">
            <text font-size="10.500" transform="translate(1851 251) rotate(-32)">TOP</text>
            <text font-size="12.500" transform="translate(1874 281) rotate(-33) skewX(-8)">FRONT</text>
          </g>
          <!-- document window buttons -->
          <path d="M1868 194.500H1876V197H1868Z" fill="#444" />
          <path d="M1887.500 186.500H1898.500V196.500H1887.500ZM1894 186.500V196.500M1894 191.500H1898.500" fill="none" stroke="#444" stroke-width="1.400" />
          <path d="M1909 186.500L1918 196.500M1918 186.500L1909 196.500" stroke="#444" stroke-width="1.800" />
        </svg>
        <div class="navbar">
          <svg width="32" height="228" viewBox="0 0 32 228">
            <g fill="#dde3ed" stroke="#7a8494" stroke-width="1.200">
              <circle cx="25" cy="6" r="3.700" fill="#8590a0" stroke="none" /><path d="M23.500 4.500L26.500 7.500M26.500 4.500L23.500 7.500" stroke="#e8edf4" />
              <path d="M6 32Q6 21.500 17 21.500H26.500V32Q26.500 42.500 16 42.500Q6 42.500 6 32Z" /><circle cx="16" cy="32" r="5.500" /><path d="M12 36L10 39M20 36L22 39" />
              <path d="M13 53H19L16 56Z" fill="#5d6878" stroke="none" /><path d="M3 60H29" />
              <path d="M11 86L4.500 78Q5.500 76 8 78L11 80L8 70Q10 67.500 12 71L14 77L13.500 68Q15.500 65.500 17.500 69V77L20 69Q22 67.500 23 70L22 79L24 74Q27 73 26.500 76L23 85L20 89H12Z" />
              <path d="M5.500 99.500H16L20 103.500V117.500H5.500Z" /><path d="M16 99.500V103.500H20" /><circle cx="20" cy="113" r="5" fill="#eef1f6" /><path d="M23.500 117L27 121" stroke-width="3" />
              <path d="M13 131H19L16 134Z" fill="#5d6878" stroke="none" />
              <g fill="none" stroke-width="1.700"><ellipse cx="16" cy="153" rx="4" ry="10.500" /><ellipse cx="16" cy="153" rx="10.500" ry="4" /><path d="M19 145L23 149M23 145L19 149M14 153H18M16 151V155" stroke-width="1.300" /></g>
              <path d="M13 173H19L16 176Z" fill="#5d6878" stroke="none" />
              <path d="M5 190H27V205H5Z" /><path d="M9 194H23V201H9Z" fill="#b8bfd0" /><path d="M6 188L12 184L13 188L21 185V189" fill="none" />
              <circle cx="25" cy="220.500" r="3.700" fill="#8590a0" stroke="none" /><path d="M23 219.500H27M24 221.500H26" stroke="#e8edf4" />
            </g>
          </svg>
        </div>
      </div>
      <div class="doctabs">
        <div class="doctab">{@render txt('coveyer belt.iam', 108)}<svg width="11" height="11" viewBox="0 0 11 11"><path d="M1 1L10 10M10 1L1 10" stroke="#888" stroke-width="2" /></svg></div>
        <svg width="18" height="16" viewBox="0 0 18 16"><path d="M0 2H18M0 8H18M0 14H18" stroke="#5e5e5e" stroke-width="2.200" /></svg>
      </div>
    </section>
  </main>

  <div class="status"><span class="ready">{@render txt('Ready', 41)}</span><span class="num">15</span><span class="num n2">16</span></div>

  <footer class="taskbar">
    <div class="start"><svg width="21" height="21" viewBox="0 0 21 21"><path d="M0 3L9 1.700V10H0ZM10 1.500L21 0V10H10ZM0 11H9V19.300L0 18ZM10 11H21V21L10 19.500Z" fill="#fff" /></svg></div>
    <div class="tsearch"><svg width="21" height="21" viewBox="0 0 21 21"><circle cx="13" cy="7.500" r="6.300" fill="none" stroke="#222" stroke-width="1.600" /><path d="M8.500 12L1 20" stroke="#222" stroke-width="1.600" /></svg>{@render txt('Type here to search', 163)}</div>
    <div class="cell c1"><svg width="20" height="20" viewBox="0 0 20 20"><circle cx="10" cy="10" r="8.300" fill="none" stroke="#fff" stroke-width="2.400" /></svg></div>
    <div class="cell"><svg width="20" height="20" viewBox="0 0 20 20"><path d="M1 0V3.500H13V0M1 20V16.500H13V20M1 6H13V14H1ZM18.500 0V5M18.500 10V20" fill="none" stroke="#fff" stroke-width="1.400" /><path d="M17 6H20V9H17Z" fill="#fff" /></svg></div>
    <div class="cell"><svg width="30" height="30" viewBox="0 0 30 30"><defs><linearGradient id="e1" x2="1"><stop offset="0" stop-color="#2aa7e8" /><stop offset="1" stop-color="#5fd668" /></linearGradient></defs><circle cx="15" cy="15" r="15" fill="#0f62b4" /><path d="M1 11Q4 0 16 0Q29 1 30 13Q29 20 22 20Q16 20 18 16Q19 9 12 9Q4 9 1 15Z" fill="url(#e1)" /><path d="M0 16Q2 9 11 9Q8 12 9 18Q12 26 21 25Q25 25 28 23Q23 31 13 30Q1 28 0 16Z" fill="#1a86dc" /><path d="M11 13Q17 9 18 15Q17 19 22 20Q25 21 29 18Q30 24 22 25Q11 25 11 13Z" fill="#0c4f9c" /><path d="M14 14Q18 11 18 15.500Q17 19 22 20H30V22L22 21Q14 20 14 14Z" fill="#38302f" /></svg></div>
    <div class="cell run"><svg width="29" height="26" viewBox="0 0 29 26"><path d="M0 2Q0 1 1 1H10L12 4H27Q28 4 28 5V24H0Z" fill="#fbc945" /><path d="M0 1H10L12 4H0Z" fill="#de9b12" /><path d="M0 6H28V24H0Z" fill="#ffd665" /><path d="M5 25V15Q5 13 7 13H21Q23 13 23 15V25H18V19H10V25Z" fill="#3f98dd" /></svg></div>
    <div class="cell"><svg width="30" height="28" viewBox="0 0 30 28"><path d="M0 10L15 0L30 10V28H0Z" fill="#0f5ba8" /><path d="M3 9H27V20H3Z" fill="#fff" /><path d="M0 10L15 19L30 10V28H0Z" fill="#2fb5f3" /><path d="M30 10V28L13 18Z" fill="#1590dc" /></svg></div>
    <div class="cell"><svg width="30" height="30" viewBox="0 0 30 30"><defs><linearGradient id="a1" x1="0" y1="1" x2="1" y2="0"><stop offset="0" stop-color="#5a23f0" /><stop offset="1" stop-color="#1593ff" /></linearGradient></defs><path d="M0 0H30V30H0Z" fill="url(#a1)" /><path d="M4 22L11 8M10 22L17 8M16 22L23 8V22M18 18H23" stroke="#fff" stroke-width="2.300" fill="none" /></svg></div>
    <div class="cell"><svg width="27" height="27" viewBox="0 0 27 27"><circle cx="13.500" cy="13.500" r="13" fill="#fff" /><path d="M5.500 3.500Q9.500 3 13.500 6Q17.500 3 21.500 3.500Q17.500 1.500 13.500 4Q9.500 1.500 5.500 3.500Z" fill="#41302b" /><path d="M9 7.500Q3.500 14 3.500 22L5 24Q7 16 13.500 10.500Q20 16 22 24L23.500 22Q23.500 14 18 7.500Q20.500 15 22 19Q18.500 12.500 13.500 9Q8.500 12.500 5 19Q6.500 15 9 7.500Z" fill="#41302b" /></svg></div>
    <div class="cell run cur"><svg width="30" height="30" viewBox="0 0 30 30"><path d="M0 0H30V30H0Z" fill="#fbe3cd" /><path d="M18 10L30 4V30H10Z" fill="#f6cfab" /><path d="M8 3H20L19 7H17V19H19L20 23H8L9 19H11V7H9Z" fill="#b5651f" /><path d="M14 5L17 7V19L14 22Z" fill="#7c3f10" /><text x="21" y="27.500" font-size="5.500" font-weight="bold" text-anchor="middle" fill="#c5752f">PRO</text></svg></div>
    <div class="tray">
      <svg class="t-news" width="30" height="20" viewBox="0 0 30 20"><path d="M26 5H29V17Q29 19 27 19H4Q1 19 1 16V1H26V17" fill="none" stroke="#fff" stroke-width="2" /><path d="M5 5H23M15 9H23M15 12H23M15 15H23M5.500 9H11.500V15H5.500Z" fill="none" stroke="#fff" stroke-width="1.500" /></svg>
      <svg class="t-chev" width="16" height="9" viewBox="0 0 16 9"><path d="M.7 8.300L8 1L15.300 8.300" fill="none" stroke="#fff" stroke-width="1.400" /></svg>
      <svg class="t-vol" width="20" height="18" viewBox="0 0 20 18"><path d="M1 6H3.500L8 2V16L3.500 12H1Z" fill="none" stroke="#fff" stroke-width="1.200" /><path d="M10.500 6.500Q12 9 10.500 11.500M13.500 4.500Q16 9 13.500 13.500" fill="none" stroke="#fff" stroke-width="1.200" /><path d="M16.500 1.500Q21 9 16.500 16.500" fill="none" stroke="#8d817d" stroke-width="1.200" /></svg>
      <svg class="t-bat" width="20" height="12" viewBox="0 0 20 12"><path d="M.7 .7H17.300V11.300H.7ZM17.500 4H19.300V8H17.500" fill="none" stroke="#fff" stroke-width="1.300" /><path d="M2.500 2.500H14V9.500H2.500Z" fill="#fff" /></svg>
      <svg class="t-wifi" width="16" height="16" viewBox="0 0 16 16"><path d="M.7 15.500Q1 1.500 15.500 1M4.500 15.500Q5 6 15.500 5.200M8.300 15.500Q9 10 15.500 9.300" fill="none" stroke="#c9c2bf" stroke-width="1.300" /><circle cx="13.500" cy="13.500" r="2" fill="#fff" /></svg>
      <span class="t-eng">{@render txt('ENG', 28)}</span>
      <div class="clock"><span>{@render txt('02:03 PM', 59)}</span><span>{@render txt('24-07-2021', 75)}</span></div>
      <svg class="t-not" width="20" height="21" viewBox="0 0 20 21"><path d="M.7 .7H19.300V14M12 17.500L9.500 19.500V17H.7V.7" fill="none" stroke="#fff" stroke-width="1.300" /><path d="M17.500 12Q20 19 12.500 19.500Q17 17 17.500 12Z" fill="#8b7f7b" stroke="#fff" stroke-width="1.100" /></svg>
      <span class="peek"></span>
    </div>
  </footer>
</div>

<style>
  :global(body) { margin: 0; overflow: hidden; }
  .app { width: 1920px; height: 1080px; display: flex; flex-direction: column; font: 15px/20px "Open Sans", "Noto Sans", sans-serif; color: #333; background: #d9d9d9; overflow: hidden; white-space: nowrap; }
  .app svg { display: block; flex: none; }
  .fit { display: inline-block; flex: none; white-space: pre; }

  .titlebar { height: 34px; display: flex; align-items: flex-start; }
  .q { display: flex; height: 26px; align-items: center; justify-content: center; flex: none; }
  .sep { width: 1px; height: 27px; background: #b5b5b5; flex: none; }
  .combo { width: 125px; height: 27px; box-sizing: border-box; padding: 0 3px 0 5px; background: #f5f5f5; display: flex; align-items: center; justify-content: space-between; font-style: italic; color: #777; flex: none; }
  .mat { margin-left: 6px; }
  .wheel { width: 20px; margin: 0 6px 0 4px; }
  .fx { font: italic 49px/50px "Liberation Serif", serif; color: #555; -webkit-text-stroke: .8px #555; padding-bottom: 2px; }
  .mini-fx { font-size: 23px; line-height: 26px; padding-bottom: 0; -webkit-text-stroke-width: .3px; }
  .apptitle { margin: 4px 0 0 66px; width: 256px; }
  .doctitle { margin-top: 4px; width: 146px; }
  .tri { margin: 8px 7px 0 0; }
  .help { width: 219px; height: 25px; line-height: 25px; padding-left: 6px; background: #f5f5f5; flex: none; }
  .person { margin: 2px 7px 0 4px; }
  .user { margin-top: 3px; width: 90px; }
  .ucaret { margin: 0 12px 0 15px; width: 8px; }
  .cart { margin-top: 3px; }
  .hsep { margin: 0 11px 0 11px; height: 24px; }
  .qm { margin-top: 2px; }
  .qcaret { width: 8px; margin-left: 8px; }
  .wmin { margin: 17px 18px 0 64px; }
  .wres { margin: 6px 17px 0 0; }
  .wx { margin-top: 7px; }

  .tabs { height: 25px; display: flex; align-items: center; color: #666; line-height: 24px; }
  .file { width: 56px; height: 25px; background: #fca41c; color: #fff; text-align: center; }
  .active { width: 86px; height: 25px; margin-left: 3px; background: #f5f5f5; color: #222; text-align: center; }
  .others { display: flex; height: 25px; gap: 24.650px; margin: 0 39px 0 13px; }
  .mini { margin-right: 7px; }

  .ribbon { height: 121px; box-sizing: border-box; display: flex; background: #f5f5f5; border-bottom: 1px solid #d5d5d5; }
  .panel { height: 119px; display: flex; flex-direction: column; border-right: 1px solid #d0d0d0; box-sizing: border-box; flex: none; }
  .p1 { width: 119px; } .p2 { width: 121px; } .p3 { width: 229px; } .p4 { width: 91px; }
  .p5 { width: 154px; } .p6 { width: 132px; } .p7 { width: 156px; } .p8 { width: 123px; }
  .tools { display: flex; height: 98px; }
  .foot { height: 21px; display: flex; align-items: center; justify-content: center; gap: 8px; padding-bottom: 1px; }
  .foot svg { margin-top: 2px; }
  .big { display: flex; flex-direction: column; align-items: center; flex: none; }
  .bigicon { height: 52px; display: flex; align-items: center; padding-top: 3px; box-sizing: border-box; }
  .lbl { height: 20px; display: flex; }
  .drop::after { content: ""; margin-top: 4px; border: 3px solid transparent; border-top: 4px solid #333; }
  .wplace { width: 68px; } .wcreate { width: 42px; }
  .wjoint { width: 50px; } .wcons { width: 70px; }
  .up .bigicon { height: 51px; }
  .wbom { width: 71px; } .wparam { width: 77px; }
  .wder { width: 131px; }
  .dcaret { margin: 72px 0 0 -14px; }
  .wplane { width: 68px; } .wsimp { width: 121px; }
  .col { display: flex; flex-direction: column; gap: 11px; padding: 8px 0 0 7px; }
  .p3 .col { padding-left: 5px; }
  .p3 .smallicon { width: 27px; }
  .p7 .col { padding-left: 3px; }
  .small { display: flex; align-items: center; height: 20px; }
  .smallicon { width: 26px; display: flex; }
  .dim { color: #b5b5b5; }
  .tinycaret { margin: 0 0 2px 10px; }
  .extra { display: flex; align-items: center; gap: 7px; height: 20px; margin: 6px 0 0 6px; }

  .work { height: 821px; display: flex; }
  .browser { width: 242px; height: 821px; background: #f5f5f5; border-right: 1px solid #b9bdc4; box-sizing: border-box; font: 12.500px/25px "Noto Sans", "Open Sans", sans-serif; color: #111; flex: none; }
  .btabs { height: 24px; background: #d9d9d9; display: flex; align-items: center; }
  .btab { width: 60px; height: 24px; padding-left: 3px; background: #f5f5f5; display: flex; align-items: center; gap: 9px; }
  .add { margin-left: 7px; }
  .srch { margin: 0 10px 0 114px; }
  .modes { display: flex; align-items: center; height: 30px; margin: 4px 0 0 6px; }
  .modes i { width: 2px; height: 18px; background: #777; margin: 0 9px 0 7px; }
  .on { color: #1b95d6; border-bottom: 1px solid #1b95d6; line-height: 19px; padding: 0 6px 0 4px; }
  .tree { margin-top: 6px; }
  .row { height: 25px; display: flex; align-items: center; padding-left: 4px; position: relative; }
  .root { padding-left: 3px; height: 26px; }
  .missing { width: 17px; height: 18px; box-sizing: border-box; border: 1.500px solid #777; border-top-right-radius: 4px; background: #fff; color: #d83a3f; font: bold 14px/15px "Open Sans", sans-serif; text-align: center; }
  .rooticon { margin: 0 3px 0 5px; }
  .root b { font-size: 12.500px; }
  .row:not(.root)::before { content: ""; position: absolute; left: 9px; top: 0; height: 25px; border-left: 1px dotted #999; }
  .row.end::before { height: 12px; }
  .child { padding-left: 24px; }
  .guide { position: absolute; left: 29px; top: 0; height: 25px; border-left: 1px dotted #999; }
  .last .guide { height: 13px; }
  .exp { width: 18px; height: 11px; display: flex; position: relative; }
  .exp svg { background: #f5f5f5; box-shadow: 0 0 0 1px #f5f5f5; }
  .exp::after { content: ""; flex: 1; margin: 5px 1px 0 3px; border-top: 1px dotted #999; }
  .leaf::after { margin-left: 6px; }
  .ti { width: 20px; margin-right: 3px; display: flex; }
  .two { width: 20px; }

  .stage { width: 1678px; display: flex; flex-direction: column; }
  .viewport { position: relative; height: 791px; overflow: hidden;
    background:
      linear-gradient(rgba(160, 176, 200, 0) 88%, rgba(160, 176, 200, .15) 100%),
      radial-gradient(ellipse 900px 1050px at 50% 80%, rgba(219, 231, 249, .95) 0%, rgba(219, 231, 249, .82) 22%, rgba(217, 229, 247, .48) 52%, rgba(215, 227, 246, .12) 82%, rgba(215, 227, 246, 0) 100%),
      linear-gradient(#98a8c0 0%, #acbbd0 44%, #b4c3d8 76%, #a8b7cc 92%, #a0aec3 100%); }
  .scene { margin-top: 1px; }
  .navbar { position: absolute; right: 0; top: 144px; width: 32px; height: 228px; border: 2px solid #8391a6; border-right-width: 1px; border-radius: 6px; background: rgba(205, 215, 228, .6); box-sizing: content-box; overflow: hidden; }
  .doctabs { height: 30px; display: flex; justify-content: space-between; align-items: center; padding-right: 5px; background: #d9d9d9; }
  .doctab { width: 135px; height: 26px; padding-left: 10px; background: #eee; border-bottom: 4px solid #35ade3; display: flex; align-items: center; gap: 7px; color: #1b95d6; }

  .status { height: 29px; background: #eee; display: flex; align-items: center; }
  .ready { flex: 1; padding-top: 2px; }
  .num { width: 39px; height: 27px; line-height: 25px; border-left: 1px solid #d0d0d0; text-align: center; letter-spacing: -.8px; margin-top: 2px; }
  .n2 { width: 36px; padding-right: 2px; }

  .taskbar { height: 50px; display: flex; color: #fff; background: linear-gradient(90deg, #363432 0%, #3a3736 26%, #443029 42%, #3d2c26 60%, #36281f 78%, #3f2d2d 90%, #38281f 100%); }
  .start { width: 60px; display: flex; align-items: center; justify-content: center; }
  .tsearch { width: 430px; height: 50px; box-sizing: border-box; border: 1px solid #bbb; background: #f2f2f2; display: flex; align-items: center; gap: 14px; padding-left: 14px; color: #333; font-size: 18px; }
  .cell { width: 62px; height: 50px; display: flex; align-items: center; justify-content: center; box-sizing: border-box; }
  .c1 { width: 60px; }
  .run { border-bottom: 3px solid #76b9ed; padding-top: 3px; width: 52px; margin: 0 4px 0 6px; }
  .cur { background: #655a57; width: 61px; margin: 0 0 0 1px; }
  .tray { flex: 1; display: flex; align-items: center; justify-content: flex-end; font-size: 15px; }
  .t-news { margin-right: 22px; } .t-chev { margin-right: 12px; } .t-vol { margin-right: 11px; } .t-bat { margin-right: 12px; } .t-wifi { margin-right: 15px; }
  .t-eng { width: 44px; }
  .clock { width: 75px; display: flex; flex-direction: column; align-items: center; line-height: 23px; margin-right: 24px; }
  .t-not { margin-right: 25px; }
  .peek { width: 1px; height: 50px; background: #8b7f7b; margin-right: 5px; }
</style>
